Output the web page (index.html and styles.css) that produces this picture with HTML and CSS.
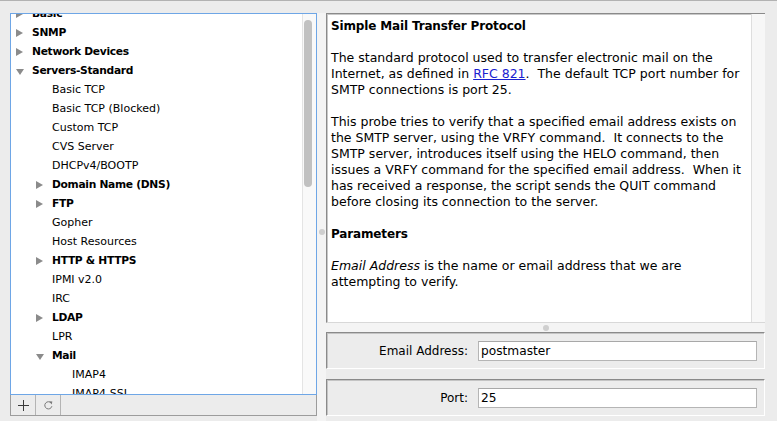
FILE: index.html
```html
<!DOCTYPE html>
<html>
<head>
<meta charset="utf-8">
<link rel="stylesheet" href="styles.css">
</head>
<body>
<div class="edge"></div>
<div class="app">
  <div class="left">
    <div class="tree">
      <div class="list">
        <div class="row l1 bold"><span class="tw closed"></span>Basic</div>
        <div class="row l1 bold"><span class="tw closed"></span>SNMP</div>
        <div class="row l1 bold"><span class="tw closed"></span>Network Devices</div>
        <div class="row l1 bold"><span class="tw open"></span>Servers-Standard</div>
        <div class="row l2"><span class="tw"></span>Basic TCP</div>
        <div class="row l2"><span class="tw"></span>Basic TCP (Blocked)</div>
        <div class="row l2"><span class="tw"></span>Custom TCP</div>
        <div class="row l2"><span class="tw"></span>CVS Server</div>
        <div class="row l2"><span class="tw"></span>DHCPv4/BOOTP</div>
        <div class="row l2 bold"><span class="tw closed"></span>Domain Name (DNS)</div>
        <div class="row l2 bold"><span class="tw closed"></span>FTP</div>
        <div class="row l2"><span class="tw"></span>Gopher</div>
        <div class="row l2"><span class="tw"></span>Host Resources</div>
        <div class="row l2 bold"><span class="tw closed"></span>HTTP &amp; HTTPS</div>
        <div class="row l2"><span class="tw"></span>IPMI v2.0</div>
        <div class="row l2"><span class="tw"></span>IRC</div>
        <div class="row l2 bold"><span class="tw closed"></span>LDAP</div>
        <div class="row l2"><span class="tw"></span>LPR</div>
        <div class="row l2 bold"><span class="tw open"></span>Mail</div>
        <div class="row l3"><span class="tw"></span>IMAP4</div>
        <div class="row l3"><span class="tw"></span>IMAP4-SSL</div>
      </div>
      <div class="vtrack"><div class="thumb"></div></div>
    </div>
    <div class="tools">
      <div class="tbtn">
        <svg width="11" height="11" viewBox="0 0 11 11"><path d="M5.5 0V11M0 5.5H11" stroke="#3a3a3a" stroke-width="1" fill="none"/></svg>
      </div>
      <div class="tbtn">
        <svg width="11" height="10" viewBox="0 0 11 10"><path d="M8.3 3.2A3.6 3.6 0 1 0 8.9 6.2" stroke="#7a7a7a" stroke-width="1" fill="none"/><path d="M6.2 1.2L9.4 1.6L8.6 4.4Z" fill="#7a7a7a"/></svg>
      </div>
      <div class="tfill"></div>
    </div>
  </div>
  <div class="vsplit"><div class="dot"></div></div>
  <div class="right">
    <div class="docbox">
      <div class="doc">
        <p class="title">Simple Mail Transfer Protocol</p>
        <p>The standard protocol used to transfer electronic mail on the<br>Internet, as defined in <a class="link" href="#">RFC 821</a>.&nbsp; The default TCP port number for<br>SMTP connections is port 25.</p>
        <p>This probe tries to verify that a specified email address exists on<br>the SMTP server, using the VRFY command.&nbsp; It connects to the<br>SMTP server, introduces itself using the HELO command, then<br>issues a VRFY command for the specified email address.&nbsp; When it<br>has received a response, the script sends the QUIT command<br>before closing its connection to the server.</p>
        <p class="title">Parameters</p>
        <p><i>Email Address</i> is the name or email address that we are<br>attempting to verify.</p>
      </div>
      <div class="dtrack"></div>
    </div>
    <div class="hsplit"><div class="dot"></div></div>
    <div class="panel">
      <label class="lbl">Email Address:</label>
      <input class="field" type="text" value="postmaster">
    </div>
    <div class="panel second">
      <label class="lbl">Port:</label>
      <input class="field" type="text" value="25">
    </div>
  </div>
</div>
</body>
</html>
```
FILE: styles.css
```css
* { box-sizing: border-box; }

body {
  margin: 0;
  width: 777px;
  height: 421px;
  overflow: hidden;
  background: #ececec;
  font-family: "DejaVu Sans", sans-serif;
  font-size: 12px;
  color: #000;
}

.edge {
  height: 1px;
  background: #b2b2b2;
}

.app {
  display: flex;
  padding: 12px 0 0 10px;
  height: 420px;
}

/* ---------- left tree ---------- */
.left {
  width: 307px;
  display: flex;
  flex-direction: column;
}

.tree {
  height: 382px;
  border: 1px solid #6ea6e6;
  background: #fff;
  display: flex;
  overflow: hidden;
}

.list {
  flex: 1;
  margin-top: -10px;
}

.row {
  height: 19px;
  line-height: 19px;
  white-space: nowrap;
  font-size: 11px;
}

.row.bold {
  font-weight: bold;
  font-size: 10.7px;
  letter-spacing: -0.3px;
}

.l1 { padding-left: 1px; }
.l2 { padding-left: 21px; }
.l3 { padding-left: 41px; }

.tw {
  display: inline-flex;
  align-items: center;
  width: 20px;
  height: 19px;
  vertical-align: top;
}

.tw.closed::before {
  content: "";
  margin-left: 4px;
  border-left: 7px solid #8b8b8b;
  border-top: 4px solid transparent;
  border-bottom: 4px solid transparent;
}

.tw.open::before {
  content: "";
  margin-left: 4px;
  margin-top: 2px;
  border-top: 6px solid #8b8b8b;
  border-left: 4px solid transparent;
  border-right: 4px solid transparent;
}

.vtrack {
  width: 14px;
  background: #f9f9f9;
  border-left: 1px solid #e4e4e4;
  padding: 6px 0 0 1px;
}

.thumb {
  width: 8px;
  height: 167px;
  border-radius: 4px;
  background: #c1c1c1;
}

.tools {
  height: 21px;
  border: 1px solid #9c9c9c;
  border-top: none;
  display: flex;
  background: #ececec;
}

.tbtn {
  width: 25px;
  border-right: 1px solid #b4b4b4;
  display: flex;
  align-items: center;
  justify-content: center;
}

.tfill { flex: 1; }

/* ---------- splitters ---------- */
.vsplit {
  width: 9px;
  background: #f4f4f4;
  display: flex;
  justify-content: center;
  padding-top: 216px;
}

.dot {
  width: 6px;
  height: 6px;
  border-radius: 50%;
  background: #cfcfcf;
}

.hsplit {
  height: 9px;
  background: #f4f4f4;
  display: flex;
  align-items: center;
  justify-content: center;
}

/* ---------- right side ---------- */
.right {
  width: 439px;
  display: flex;
  flex-direction: column;
}

.docbox {
  height: 310px;
  display: flex;
  background: #fff;
  border-top: 1px solid #8a8a8a;
  border-left: 1px solid #8a8a8a;
  border-bottom: 1px solid #d8d8d8;
}

.doc {
  flex: 1;
  padding: 4px 4px;
  box-shadow: inset 1px 1px 0 #c8c8c8;
  font-size: 12.5px;
  line-height: 16px;
  white-space: nowrap;
}

.doc p {
  margin: 0 0 16px;
}

.doc .title {
  font-weight: bold;
  font-size: 12px;
  letter-spacing: -0.15px;
}

.link {
  color: #1a22d0;
  text-decoration: underline;
}

.dtrack {
  width: 14px;
  background: #f7f7f7;
  border-left: 1px solid #dedede;
}

.panel {
  display: flex;
  align-items: center;
  gap: 10px;
  padding: 8px 7px 7px 0;
  border: 1px solid;
  border-color: #8a8a8a #fff #fff #8a8a8a;
  box-shadow: inset 1px 1px 0 #c4c4c4;
}

.panel.second {
  margin-top: 10px;
}

.lbl {
  flex: 1;
  text-align: right;
  line-height: 20px;
  font-size: 12px;
}

.field {
  width: 279px;
  height: 20px;
  margin: 0;
  padding: 0 2px;
  border: 1px solid #b5b5b5;
  border-top-color: #a8a8a8;
  background: #fff;
  font-family: "DejaVu Sans", sans-serif;
  font-size: 12.2px;
  color: #000;
  outline: none;
}
```
